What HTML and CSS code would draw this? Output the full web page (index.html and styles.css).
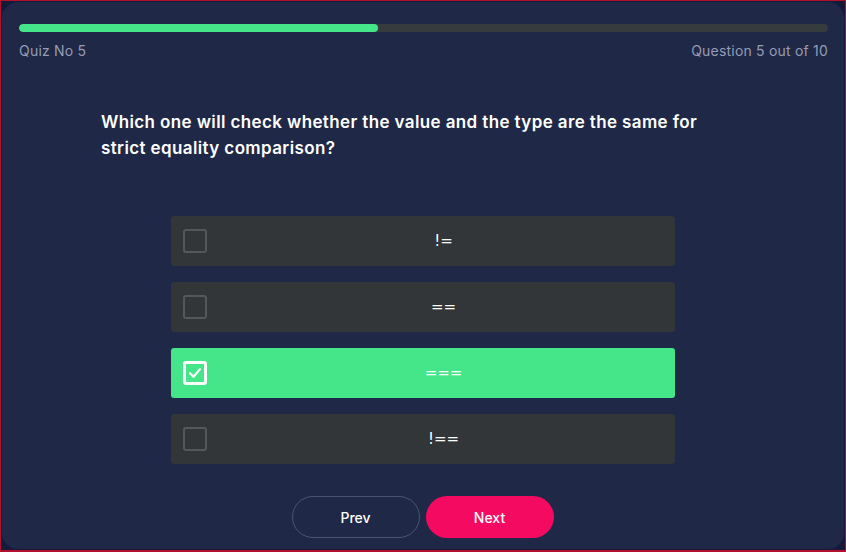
FILE: index.html
```html
<!DOCTYPE html>
<html>
<head>
<meta charset="utf-8">
<link rel="stylesheet" href="styles.css">
</head>
<body>
<div class="frame">
  <div class="card">
    <div class="progress"><div class="progress-fill" style="width:44.4%"></div></div>
    <div class="meta">
      <span>Quiz No 5</span>
      <span>Question 5 out of 10</span>
    </div>
    <h1 class="question">Which one will check whether the value and the type are the same for strict equality comparison?</h1>
    <ul class="options">
      <li class="option"><span class="box"></span><span class="label">!=</span></li>
      <li class="option"><span class="box"></span><span class="label">==</span></li>
      <li class="option selected"><span class="box"><svg viewBox="0 0 24 24" width="18" height="18"><path d="M5.5 12.5l4.5 4.5 8.5-10" fill="none" stroke="#fff" stroke-width="3" stroke-linecap="round" stroke-linejoin="round"/></svg></span><span class="label">===</span></li>
      <li class="option"><span class="box"></span><span class="label">!==</span></li>
    </ul>
    <div class="actions">
      <button class="btn btn-prev">Prev</button>
      <button class="btn btn-next">Next</button>
    </div>
  </div>
</div>
</body>
</html>
```
FILE: styles.css
```css
* { box-sizing: border-box; }
html, body { margin: 0; padding: 0; }
body {
  width: 846px;
  height: 552px;
  background: #151a3b;
  font-family: Inter, "Open Sans", sans-serif;
  overflow: hidden;
}
.frame {
  width: 846px;
  height: 552px;
  border: 1px solid #b3102e;
  border-bottom-width: 2px;
  padding: 1px;
}
.card {
  height: 100%;
  background: #1f2846;
  border-radius: 16px;
  padding: 22px 16px 0 17px;
  display: flex;
  flex-direction: column;
}
.progress {
  height: 8px;
  border-radius: 4px;
  background: #363b3d;
  overflow: hidden;
}
.progress-fill {
  height: 100%;
  background: #45e58a;
  border-radius: 4px;
}
.meta {
  display: flex;
  justify-content: space-between;
  margin-top: 10px;
  font-size: 14px;
  color: #969cb5;
  letter-spacing: 0.2px;
}
.question {
  margin: 50px 0 0 82px;
  width: 615px;
  font-size: 17px;
  line-height: 26px;
  font-weight: 600;
  color: #ffffff;
  letter-spacing: 0.38px;
}
.options {
  list-style: none;
  margin: 55px 0 0 -2px;
  padding: 0;
  display: flex;
  flex-direction: column;
  align-items: center;
  gap: 16px;
}
.option {
  width: 504px;
  height: 50px;
  background: #333638;
  border-radius: 3px;
  display: flex;
  align-items: center;
  padding-left: 12px;
}
.box {
  width: 24px;
  height: 24px;
  border: 2px solid #54585b;
  border-radius: 3px;
  display: flex;
  align-items: center;
  justify-content: center;
}
.label {
  flex: 1;
  text-align: center;
  color: #ffffff;
  font-family: "DejaVu Sans", sans-serif;
  font-size: 15px;
  padding-left: 6px;
}
.option.selected { background: #45e58a; }
.option.selected .box { border: 3px solid #ffffff; }
.actions {
  display: flex;
  justify-content: center;
  gap: 6px;
  margin: 32px 0 0 -2px;
}
.btn {
  width: 128px;
  height: 42px;
  border-radius: 21px;
  font-family: Inter, "Open Sans", sans-serif;
  font-size: 14px;
  font-weight: 500;
  color: #ffffff;
  cursor: pointer;
}
.btn-prev {
  background: transparent;
  border: 1px solid #4b5370;
}
.btn-next {
  background: #f50a62;
  border: none;
}
```
